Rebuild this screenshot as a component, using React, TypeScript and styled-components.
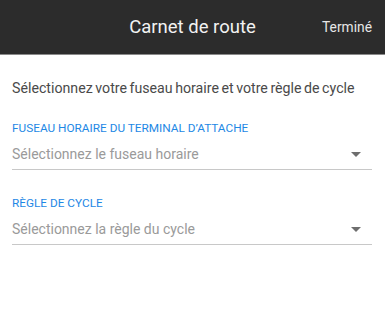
import React from 'react';
import styled, { createGlobalStyle } from 'styled-components';

const GlobalStyle = createGlobalStyle`
  html, body {
    margin: 0;
    padding: 0;
    background: #ffffff;
    font-family: Roboto, 'Liberation Sans', sans-serif;
  }
`;

interface IField {
  label: string;
  placeholder: string;
}

const fields: IField[] = [
  {
    label: 'Fuseau horaire du terminal d’attache',
    placeholder: 'Sélectionnez le fuseau horaire',
  },
  {
    label: 'Règle de cycle',
    placeholder: 'Sélectionnez la règle du cycle',
  },
];

const SelectField: React.FC<IField> = ({ label, placeholder }) => (
  <FieldWrapper>
    <FieldLabel>{label}</FieldLabel>
    <SelectRow>
      <Placeholder>{placeholder}</Placeholder>
      <Caret />
    </SelectRow>
  </FieldWrapper>
);

export default function App() {
  return (
    <>
      <GlobalStyle />
      <Page>
        <Header>
          <Title>Carnet de route</Title>
          <DoneButton>Terminé</DoneButton>
        </Header>
        <Content>
          <Intro>Sélectionnez votre fuseau horaire et votre règle de cycle</Intro>
          {fields.map((field) => (
            <SelectField key={field.label} {...field} />
          ))}
        </Content>
      </Page>
    </>
  );
}

const Page = styled.div`
  width: 385px;
  height: 316px;
  background: #ffffff;
`;
const Header = styled.header`
  position: relative;
  height: 54px;
  display: flex;
  align-items: center;
  justify-content: center;
  background: #2c2c2c;
  border-bottom: 1px solid #8a8a8a;
`;
const Title = styled.h1`
  margin: 0;
  font-size: 18.5px;
  font-weight: 400;
  color: #f2f2f2;
`;
const DoneButton = styled.button`
  position: absolute;
  right: 13px;
  top: 50%;
  transform: translateY(-50%);
  padding: 0;
  border: none;
  background: none;
  font-family: inherit;
  font-size: 13.8px;
  color: #e6e6e6;
  cursor: pointer;
`;
const Content = styled.main`
  padding: 23px 13px 0 12px;
  display: flex;
  flex-direction: column;
`;
const Intro = styled.p`
  margin: 0 0 22px;
  font-size: 14.2px;
  line-height: 20px;
  word-spacing: -1px;
  white-space: nowrap;
  color: #4a4a4a;
`;
const FieldWrapper = styled.div`
  display: flex;
  flex-direction: column;
  margin-bottom: 25px;
`;
const FieldLabel = styled.label`
  font-size: 11.8px;
  line-height: 16px;
  text-transform: uppercase;
  color: #1e88e5;
`;
const SelectRow = styled.div`
  display: flex;
  align-items: center;
  justify-content: space-between;
  height: 30px;
  border-bottom: 1px solid #c8c8c8;
  margin-top: 3px;
`;
const Placeholder = styled.span`
  font-size: 14px;
  color: #9a9a9a;
`;
const Caret = styled.span`
  width: 0;
  height: 0;
  margin-right: 11px;
  border-left: 5px solid transparent;
  border-right: 5px solid transparent;
  border-top: 5px solid #6e6e6e;
`;
